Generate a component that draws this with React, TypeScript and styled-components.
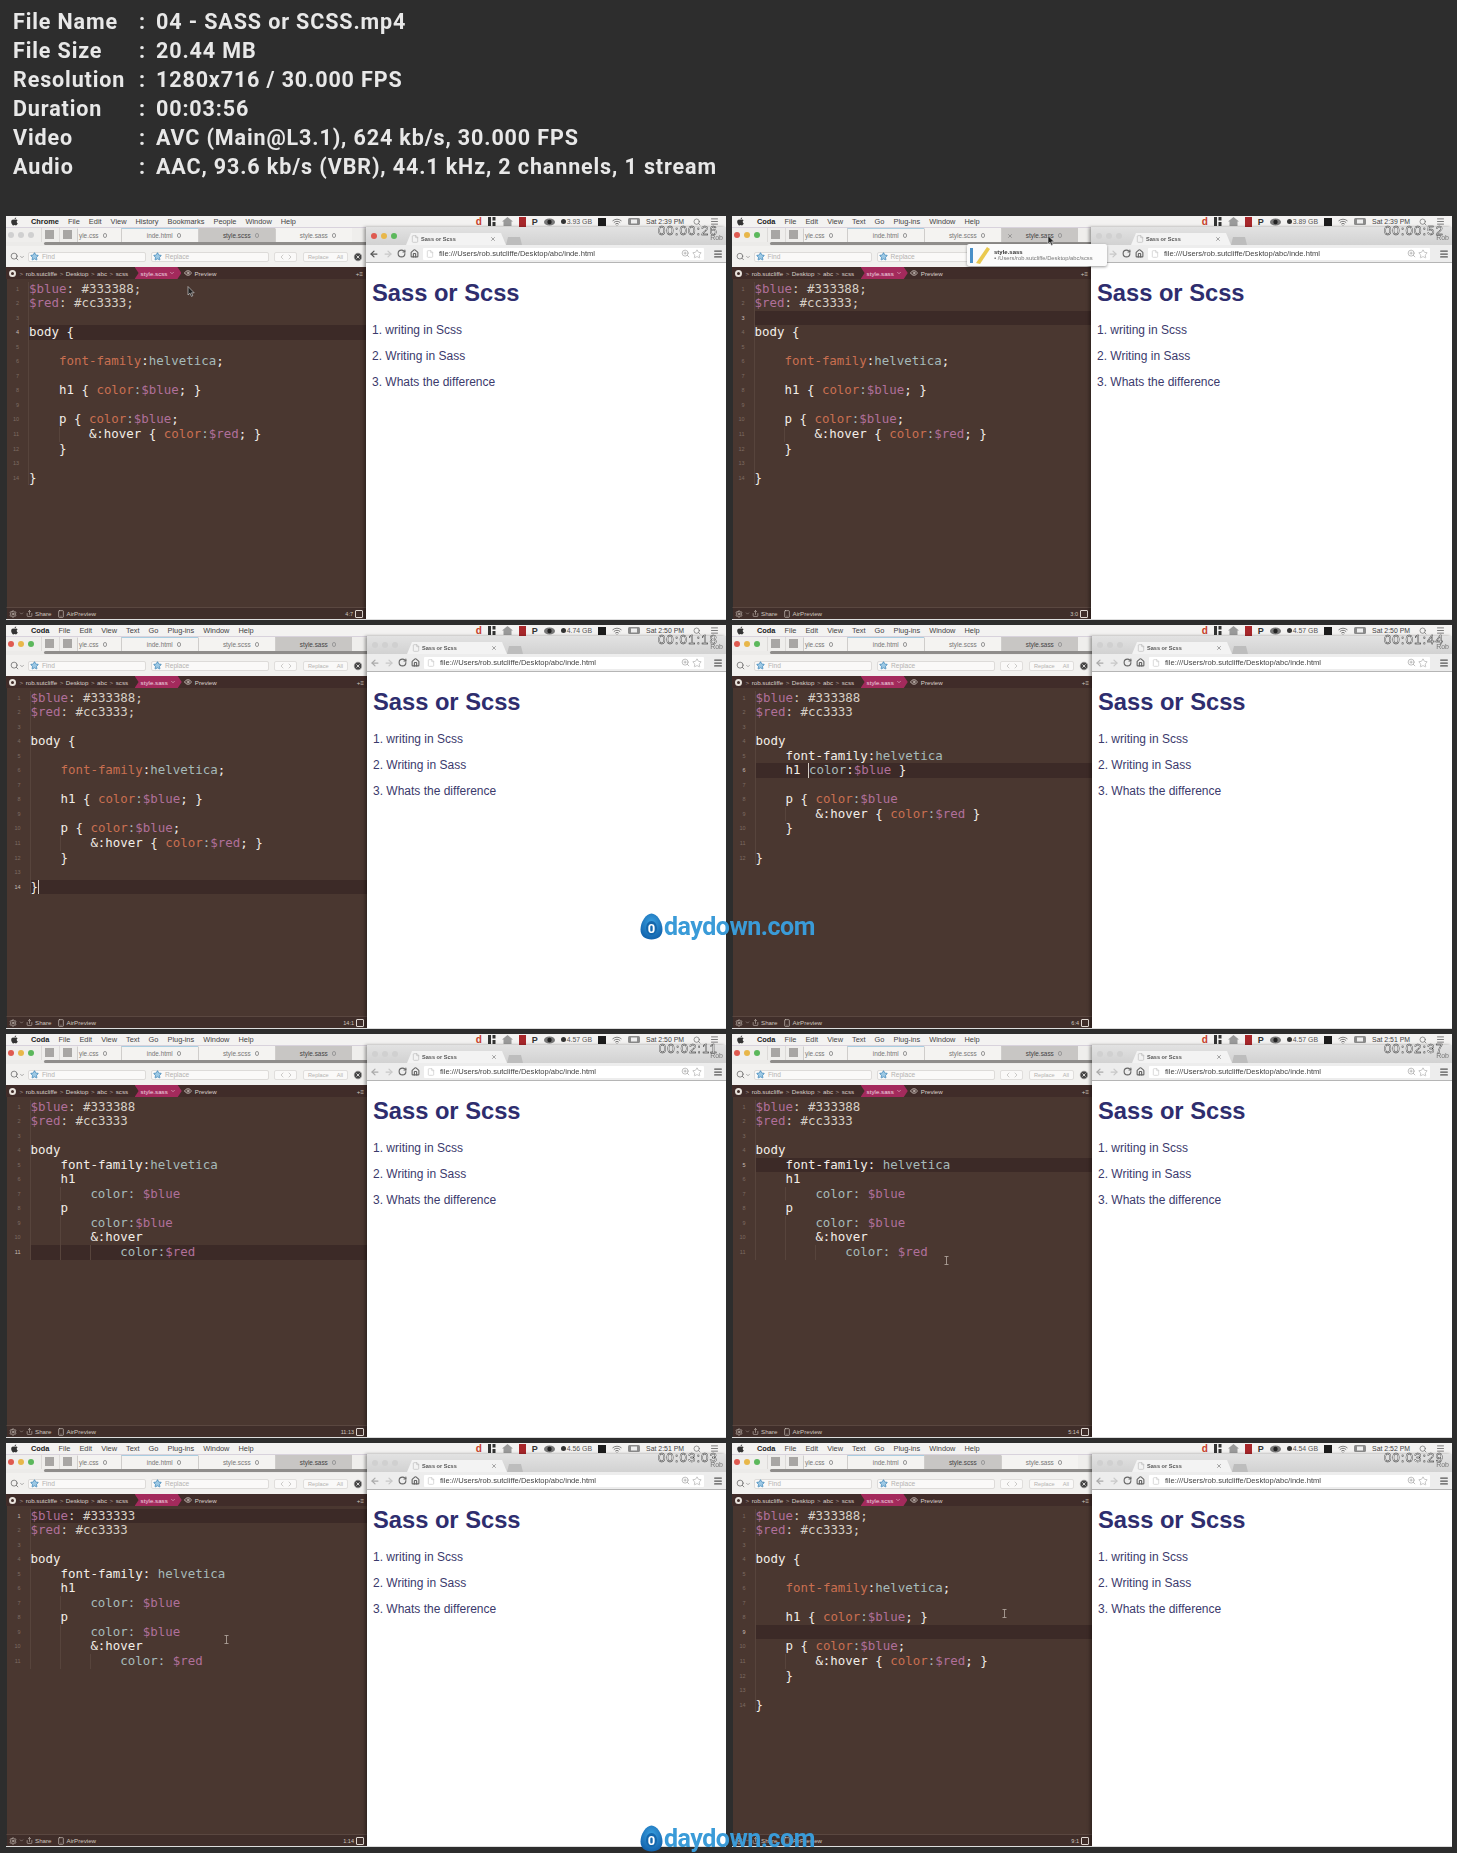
import React from 'react';
import styled, { createGlobalStyle } from 'styled-components';
import { FaApple } from 'react-icons/fa';
import {
  ArrowLeft, ArrowRight, ChevronDown, ChevronLeft, ChevronRight, Eye, File as FileIcon, Home, Menu,
  Plus, RotateCw, Search, Settings, Share, Smartphone, Star, Wifi, X, XCircle, ZoomIn,
} from 'lucide-react';

/* data */
type Kind = 'v' | 'h' | 'w' | 'o' | 't' | 'caret';
type Tok = [Kind, string];
type Line = { indent?: number; toks?: Tok[] };

const blue = (hex = '#333388', end = ''): Line => ({ toks: [['v', '$blue'], ['h', `: ${hex}${end}`]] });
const red = (end = ''): Line => ({ toks: [['v', '$red'], ['h', `: #cc3333${end}`]] });
const w = (indent: number, text: string): Line => ({ indent, toks: [['w', text]] });

const scssLines: Line[] = [
  blue('#333388', ';'),
  red(';'),
  {},
  w(0, 'body {'),
  {},
  { indent: 1, toks: [['o', 'font-family'], ['w', ':'], ['t', 'helvetica'], ['w', ';']] },
  {},
  { indent: 1, toks: [['w', 'h1 { '], ['o', 'color'], ['t', ':'], ['v', '$blue'], ['w', '; }']] },
  {},
  { indent: 1, toks: [['w', 'p { '], ['o', 'color'], ['t', ':'], ['v', '$blue'], ['w', ';']] },
  { indent: 2, toks: [['w', '&:hover { '], ['o', 'color'], ['t', ':'], ['v', '$red'], ['w', '; }']] },
  w(1, '}'),
  {},
  w(0, '}'),
];

const halfLines: Line[] = [
  blue(),
  red(),
  {},
  w(0, 'body'),
  { indent: 1, toks: [['w', 'font-family:'], ['t', 'helvetica']] },
  { indent: 1, toks: [['w', 'h1 '], ['caret', ''], ['t', 'color'], ['w', ':'], ['v', '$blue'], ['w', ' }']] },
  {},
  { indent: 1, toks: [['w', 'p { '], ['o', 'color'], ['t', ':'], ['v', '$blue']] },
  { indent: 2, toks: [['w', '&:hover { '], ['o', 'color'], ['t', ':'], ['v', '$red'], ['w', ' }']] },
  w(1, '}'),
  {},
  w(0, '}'),
];

const sassTight: Line[] = [
  blue(),
  red(),
  {},
  w(0, 'body'),
  { indent: 1, toks: [['w', 'font-family:'], ['t', 'helvetica']] },
  w(1, 'h1'),
  { indent: 2, toks: [['t', 'color: '], ['v', '$blue']] },
  w(1, 'p'),
  { indent: 2, toks: [['t', 'color:'], ['v', '$blue']] },
  w(2, '&:hover'),
  { indent: 3, toks: [['t', 'color:'], ['v', '$red']] },
];

const sassSpaced = (hex: string): Line[] => [
  blue(hex),
  red(),
  {},
  w(0, 'body'),
  { indent: 1, toks: [['w', 'font-family: '], ['t', 'helvetica']] },
  w(1, 'h1'),
  { indent: 2, toks: [['t', 'color: '], ['v', '$blue']] },
  w(1, 'p'),
  { indent: 2, toks: [['t', 'color: '], ['v', '$blue']] },
  w(2, '&:hover'),
  { indent: 3, toks: [['t', 'color: '], ['v', '$red']] },
];

const chromeMenu = ['File', 'Edit', 'View', 'History', 'Bookmarks', 'People', 'Window', 'Help'];
const codaMenu = ['File', 'Edit', 'View', 'Text', 'Go', 'Plug-ins', 'Window', 'Help'];

type Shot = {
  app: string; menu: string[]; mem: string; clock: string; stamp: string; tab: number; lines: Line[];
  active: number; pos: string; split: number; gutter: number; browserFocus?: boolean; tip?: boolean;
  caretEnd?: boolean; arrow?: [number, number]; beam?: [number, number];
};

const shots: Shot[] = [
  { app: 'Chrome', menu: chromeMenu, mem: '3.93 GB', clock: 'Sat 2:39 PM', stamp: '00:00:26', tab: 2, lines: scssLines, active: 4, pos: '4:7', split: 360, gutter: 23, browserFocus: true, arrow: [181, 70] },
  { app: 'Coda', menu: codaMenu, mem: '3.89 GB', clock: 'Sat 2:39 PM', stamp: '00:00:52', tab: 3, lines: scssLines, active: 3, pos: '3:0', split: 359, gutter: 22.5, tip: true, arrow: [315, 19] },
  { app: 'Coda', menu: codaMenu, mem: '4.74 GB', clock: 'Sat 2:50 PM', stamp: '00:01:18', tab: 3, lines: scssLines, active: 14, pos: '14:1', split: 361, gutter: 24.5, caretEnd: true },
  { app: 'Coda', menu: codaMenu, mem: '4.57 GB', clock: 'Sat 2:50 PM', stamp: '00:01:44', tab: 3, lines: halfLines, active: 6, pos: '6:4', split: 360, gutter: 23.5 },
  { app: 'Coda', menu: codaMenu, mem: '4.57 GB', clock: 'Sat 2:50 PM', stamp: '00:02:11', tab: 3, lines: sassTight, active: 11, pos: '11:13', split: 361, gutter: 24.5 },
  { app: 'Coda', menu: codaMenu, mem: '4.57 GB', clock: 'Sat 2:51 PM', stamp: '00:02:37', tab: 3, lines: sassSpaced('#333388'), active: 5, pos: '5:14', split: 360, gutter: 23.5, beam: [212, 222] },
  { app: 'Coda', menu: codaMenu, mem: '4.56 GB', clock: 'Sat 2:51 PM', stamp: '00:03:03', tab: 3, lines: sassSpaced('#333333'), active: 1, pos: '1:14', split: 361, gutter: 24.5, beam: [218, 192] },
  { app: 'Coda', menu: codaMenu, mem: '4.54 GB', clock: 'Sat 2:52 PM', stamp: '00:03:29', tab: 2, lines: scssLines, active: 9, pos: '9:1', split: 360, gutter: 23.5, beam: [270, 166] },
];

const info = [
  ['File Name', '04 - SASS or SCSS.mp4'],
  ['File Size', '20.44 MB'],
  ['Resolution', '1280x716 / 30.000 FPS'],
  ['Duration', '00:03:56'],
  ['Video', 'AVC (Main@L3.1), 624 kb/s, 30.000 FPS'],
  ['Audio', 'AAC, 93.6 kb/s (VBR), 44.1 kHz, 2 channels, 1 stream'],
];

const tabNames = ['yle.css', 'inde.html', 'style.scss', 'style.sass'];

const App: React.FC = () => (
  <Page>
    <GlobalStyle />
    <Header>
      {info.map(([label, value]) => (
        <InfoRow key={label}>
          <span>{label}</span>
          <span>:</span>
          <span>{value}</span>
        </InfoRow>
      ))}
    </Header>
    <Grid>
      {shots.map((shot) => (
        <Thumb key={shot.stamp} shot={shot} />
      ))}
    </Grid>
    <Watermark $top={913} />
    <Watermark $top={1825} />
  </Page>
);

const Watermark: React.FC<{ $top: number }> = ({ $top }) => (
  <MarkWrap $top={$top}>
    <svg width="23" height="27" viewBox="0 0 23 27">
      <defs>
        <radialGradient id="egg" cx="0.5" cy="0.35" r="0.7">
          <stop offset="0" stopColor="#3aa0e0" />
          <stop offset="1" stopColor="#0f5ea8" />
        </radialGradient>
      </defs>
      <path d="M11.5 0.5C17 0.5 22.5 9 22.5 16.5C22.5 23 18 26.5 11.5 26.5C5 26.5 0.5 23 0.5 16.5C0.5 9 6 0.5 11.5 0.5Z" fill="url(#egg)" />
      <ellipse cx="11.5" cy="15" rx="5.5" ry="7" fill="#1467ad" />
      <text x="11.5" y="19.5" textAnchor="middle" fontSize="13" fontWeight="700" fontFamily="Roboto, sans-serif" fill="#fff">0</text>
    </svg>
    <MarkText>daydown.com</MarkText>
  </MarkWrap>
);

const Thumb: React.FC<{ shot: Shot }> = ({ shot }) => (
  <ThumbBox>
    <MenuBar>
      <FaApple size={9} color="#333" />
      <AppName>{shot.app}</AppName>
      {shot.menu.map((m) => <span key={m}>{m}</span>)}
      <Extras>
        <RedGlyph>d</RedGlyph>
        <svg width="8" height="9" viewBox="0 0 8 9"><rect x="0" y="0" width="3" height="9" fill="#333" /><rect x="4.5" y="0" width="3" height="3.5" fill="#333" /><rect x="4.5" y="5" width="3" height="4" fill="#333" /></svg>
        <svg width="11" height="9" viewBox="0 0 11 9"><path d="M5.5 0L11 4.5H9.5V9H1.5V4.5H0Z" fill="#9a9a9a" /></svg>
        <RedBox />
        <DarkGlyph>P</DarkGlyph>
        <svg width="11" height="8" viewBox="0 0 11 8"><ellipse cx="5.5" cy="4" rx="5.5" ry="3.6" fill="#777" /><circle cx="5.5" cy="4" r="2.2" fill="#222" /></svg>
        <Memory><Dot />{shot.mem}</Memory>
        <BlackBag />
        <Wifi size={10} color="#666" />
        <svg width="12" height="7" viewBox="0 0 12 7"><rect width="12" height="7" rx="1.5" fill="#8b8b8b" /><rect x="3" y="1.5" width="6" height="4" fill="#eee" /></svg>
        <span>{shot.clock}</span>
        <Search size={8} color="#666" />
        <Menu size={9} color="#555" />
      </Extras>
    </MenuBar>
    <Desk>
      <EditorCol $width={shot.split}>
        <TabRow>
          <Lights $on={!shot.browserFocus} />
          <SideButton /><SideButton />
          <Tabs>
            {tabNames.map((name, i) => (
              <EditorTab key={name} $first={i === 0} $on={i === shot.tab} $linked={i === 1}>
                {shot.tip && i === 3 && <TabClose><X size={6} /></TabClose>}
                {name} <Ring />
              </EditorTab>
            ))}
          </Tabs>
          <AddTab><Plus size={10} /></AddTab>
        </TabRow>
        <ScrollRow><ScrollThumb /></ScrollRow>
        <FindRow>
          <Search size={9} color="#666" /><Caret2><ChevronDown size={6} /></Caret2>
          <FindBox><Star size={9} color="#3d86b8" fill="#9cc8e4" /><i>Find</i></FindBox>
          <FindBox><Star size={9} color="#3d86b8" fill="#9cc8e4" /><i>Replace</i></FindBox>
          <Stepper><ChevronLeft size={8} /><ChevronRight size={8} /></Stepper>
          <ReplaceAll><span>Replace</span><span>All</span></ReplaceAll>
          <XCircle size={10} color="#f3f1ef" fill="#444" />
        </FindRow>
        <Crumbs>
          <CrumbDot />
          {['rob.sutcliffe', 'Desktop', 'abc', 'scss'].map((c) => (
            <React.Fragment key={c}><CrumbSep>&gt;</CrumbSep><span>{c}</span></React.Fragment>
          ))}
          <FilePill>{tabNames[shot.tab]} <ChevronDown size={6} /></FilePill>
          <Eye size={8} color="#e8e0da" />
          <span>Preview</span>
          <CrumbEnd>+≡</CrumbEnd>
        </Crumbs>
        <Code>
          {shot.lines.map((line, i) => (
            <CodeRow key={i}>
              <LineNo $width={shot.gutter} $on={i + 1 === shot.active}>{i + 1}</LineNo>
              <LineBody $on={i + 1 === shot.active}>
                {Array.from({ length: line.indent || 0 }).map((_, k) => <Indent key={k} $guide={k > 0} />)}
                {(line.toks || []).map(([kind, text], k) =>
                  kind === 'caret' ? <TextCaret key={k} /> : <Token key={k} $kind={kind}>{text}</Token>
                )}
                {shot.caretEnd && i + 1 === shot.active && <TextCaret />}
              </LineBody>
            </CodeRow>
          ))}
        </Code>
        <StatusBar>
          <Settings size={8} /><ChevronDown size={5} />
          <Share size={7} /><span>Share</span>
          <Smartphone size={8} /><span>AirPreview</span>
          <StatusEnd><span>{shot.pos}</span><StatusBox /></StatusEnd>
        </StatusBar>
      </EditorCol>
      <BrowserCol>
        <ChromeTabs>
          <Lights $on={!!shot.browserFocus} />
          <BrowserTab>
            <FileIcon size={8} color="#bbb" />
            <span>Sass or Scss</span>
            <X size={6} />
          </BrowserTab>
          <NewTab />
          <Rob>Rob</Rob>
        </ChromeTabs>
        <Toolbar>
          <ArrowLeft size={10} color={shot.browserFocus ? '#555' : '#aaa'} strokeWidth={3} />
          <ArrowRight size={10} color="#c8c8c8" strokeWidth={3} />
          <RotateCw size={9} color="#666" strokeWidth={3} />
          <Home size={9} color="#666" strokeWidth={3} />
          <UrlBox>
            <FileIcon size={8} color="#c8c8c8" />
            <span>file:///Users/rob.sutcliffe/Desktop/abc/inde.html</span>
            <UrlEnd><ZoomIn size={9} color="#aaa" /><Star size={10} color="#bbb" /></UrlEnd>
          </UrlBox>
          <Menu size={10} color="#555" strokeWidth={3} />
        </Toolbar>
        <Web>
          <h1>Sass or Scss</h1>
          <p>1. writing in Scss</p>
          <p>2. Writing in Sass</p>
          <p>3. Whats the difference</p>
        </Web>
      </BrowserCol>
    </Desk>
    <Stamp>{shot.stamp}</Stamp>
    {shot.tip && (
      <Tip>
        <svg width="22" height="20" viewBox="0 0 22 20">
          <rect x="1" y="3" width="3" height="15" fill="#4a90c8" />
          <path d="M7 18L18 2L21 4L11 19Z" fill="#eac94f" />
        </svg>
        <div>
          <TipName>style.sass</TipName>
          <TipPath>▪ /Users/rob.sutcliffe/Desktop/abc/scss</TipPath>
        </div>
      </Tip>
    )}
    {shot.arrow && (
      <Pointer $x={shot.arrow[0]} $y={shot.arrow[1]}>
        <svg width="8" height="11" viewBox="0 0 8 11"><path d="M1 0.5V9L3 7.2L4.4 10.4L5.8 9.8L4.5 6.8H7.2Z" fill="#222" stroke="#ddd" strokeWidth="0.6" /></svg>
      </Pointer>
    )}
    {shot.beam && (
      <Pointer $x={shot.beam[0]} $y={shot.beam[1]}>
        <svg width="5" height="9" viewBox="0 0 5 9"><path d="M0.5 0.5H4.5M2.5 0.5V8.5M0.5 8.5H4.5" stroke="#b8aca4" strokeWidth="0.8" fill="none" /></svg>
      </Pointer>
    )}
  </ThumbBox>
);

export default App;

/* Styling */
const GlobalStyle = createGlobalStyle`
  html, body { margin: 0; padding: 0; background: #2d2d2d; }
`;

const Page = styled.div`
  position: relative;
  width: 1457px;
  height: 1853px;
  background: #2d2d2d;
  overflow: hidden;
  font-family: 'Liberation Sans', Arial, sans-serif;
`;

const Header = styled.div`
  height: 216px;
  box-sizing: border-box;
  padding: 7px 0 0 13px;
  filter: blur(0.3px);
`;

const InfoRow = styled.div`
  display: grid;
  grid-template-columns: 126px 17px 1fr;
  height: 29px;
  font: 700 21.5px/29px Roboto, 'Open Sans', sans-serif;
  letter-spacing: 0.88px;
  color: #e8e8e8;
  white-space: nowrap;
`;

const Grid = styled.div`
  display: grid;
  grid-template-columns: repeat(2, 720px);
  grid-auto-rows: 404px;
  gap: 5px 6px;
  padding-left: 6px;
`;

const ThumbBox = styled.div`
  position: relative;
  display: flex;
  flex-direction: column;
  overflow: hidden;
  filter: blur(0.3px);
  border-bottom: 1px solid #ddd;
  box-sizing: border-box;
`;

const MenuBar = styled.div`
  flex: 0 0 11px;
  display: flex;
  align-items: center;
  gap: 9px;
  padding-left: 4px;
  background: #f3f2f1;
  color: #444;
  font-size: 7.4px;
  white-space: nowrap;
`;

const AppName = styled.b`
  color: #222;
  margin-left: 3px;
`;

const Extras = styled.div`
  margin-left: auto;
  display: flex;
  align-items: center;
  gap: 6px;
  padding-right: 7px;
  font-size: 6.9px;
  svg:nth-last-child(-n + 2) { margin-left: 3px; }
`;

const RedGlyph = styled.b`
  color: #c8402a;
  font-size: 10px;
`;

const DarkGlyph = styled.b`
  color: #333;
  font-size: 9px;
`;

const RedBox = styled.div`
  width: 7px;
  height: 10px;
  background: #a8272b;
`;

const BlackBag = styled.div`
  width: 8px;
  height: 8px;
  background: #1c1c1c;
`;

const Memory = styled.span`
  display: flex;
  align-items: center;
  gap: 1px;
  color: #555;
`;

const Dot = styled.i`
  width: 5px;
  height: 5px;
  border-radius: 50%;
  background: #333;
`;

const Desk = styled.div`
  flex: 1;
  min-height: 0;
  display: flex;
`;

const EditorCol = styled.div<{ $width: number }>`
  flex: 0 0 ${(p) => p.$width}px;
  min-width: 0;
  display: flex;
  flex-direction: column;
`;

const TabRow = styled.div`
  flex: 0 0 15px;
  display: flex;
  align-items: stretch;
  background: #efeeec;
  border-top: 1px solid #d8d2dc;
  box-sizing: border-box;
`;

const Lights = styled.div<{ $on: boolean }>`
  flex: 0 0 auto;
  align-self: center;
  width: 6px;
  height: 6px;
  margin: 0 27px 0 2px;
  border-radius: 50%;
  background: ${(p) => (p.$on ? '#df5a50' : '#d0d0d0')};
  box-shadow:
    10px 0 0 ${(p) => (p.$on ? '#e8b74a' : '#d0d0d0')},
    20px 0 0 ${(p) => (p.$on ? '#5cb85c' : '#d0d0d0')};
`;

const SideButton = styled.div`
  flex: 0 0 18px;
  position: relative;
  border-left: 1px solid #dcdad8;
  box-sizing: border-box;
  &::after {
    content: '';
    display: block;
    width: 9px;
    height: 9px;
    margin: 2px 0 0 3px;
    background: #a8a6a4;
  }
`;

const Tabs = styled.div`
  flex: 1;
  display: flex;
  min-width: 0;
`;

const EditorTab = styled.div<{ $first: boolean; $on: boolean; $linked: boolean }>`
  position: relative;
  flex: ${(p) => (p.$first ? '0 0 44px' : '0 0 77px')};
  display: flex;
  align-items: center;
  justify-content: ${(p) => (p.$first ? 'flex-start' : 'center')};
  gap: 2px;
  padding-left: ${(p) => (p.$first ? '1px' : '8px')};
  box-sizing: border-box;
  font-size: 6.4px;
  color: ${(p) => (p.$on ? '#444' : '#777')};
  background: ${(p) => (p.$on ? '#c8c6c4' : '#f4f3f1')};
  border-left: 1px solid #cfcdcb;
  border-top: 1px solid ${(p) => (p.$linked ? '#a9cde0' : 'transparent')};
  white-space: nowrap;
`;

const Ring = styled.i`
  width: 2.5px;
  height: 2.5px;
  margin-left: 2px;
  border: 0.6px solid #999;
  border-radius: 50%;
`;

const TabClose = styled.span`
  position: absolute;
  left: 5px;
  top: 4px;
  color: #666;
`;

const AddTab = styled.div`
  flex: 1 0 14px;
  display: flex;
  align-items: center;
  justify-content: center;
  color: #888;
  border-left: 1px solid #cfcdcb;
`;

const ScrollRow = styled.div`
  flex: 0 0 4px;
  background: #ecebe9;
  padding-left: 38px;
`;

const ScrollThumb = styled.div`
  height: 3px;
  background: #8f8d8b;
  border-radius: 2px 0 0 2px;
`;

const FindRow = styled.div`
  flex: 0 0 21px;
  display: flex;
  align-items: center;
  padding: 0 3px 0 4px;
  background: #f2f1ef;
  font-size: 6.6px;
  color: #b5b3b1;
`;

const Caret2 = styled.span`
  display: flex;
  margin-right: 3px;
  color: #666;
`;

const FindBox = styled.div`
  flex: 0 0 118px;
  height: 10px;
  display: flex;
  align-items: center;
  gap: 3px;
  margin-right: 5px;
  padding-left: 1px;
  box-sizing: border-box;
  background: #faf9f8;
  border: 1px solid #dddbd9;
  border-radius: 2px;
  i { font-style: normal; }
`;

const Stepper = styled.div`
  flex: 0 0 23px;
  height: 10px;
  display: flex;
  align-items: center;
  justify-content: center;
  box-sizing: border-box;
  border: 1px solid #e0dedc;
  border-radius: 2px;
  background: #faf9f8;
  color: #b5b3b1;
`;

const ReplaceAll = styled.div`
  flex: 0 0 45px;
  height: 10px;
  margin: 0 5px 0 6px;
  display: flex;
  align-items: center;
  justify-content: space-around;
  box-sizing: border-box;
  border: 1px solid #e0dedc;
  border-radius: 2px;
  background: #faf9f8;
  font-size: 5.6px;
`;

const Crumbs = styled.div`
  flex: 0 0 12px;
  display: flex;
  align-items: center;
  gap: 2.5px;
  padding-left: 4px;
  background: #402c29;
  color: #d8cfc9;
  font-size: 6.2px;
  white-space: nowrap;
`;

const CrumbDot = styled.i`
  width: 3px;
  height: 3px;
  margin: 0 1px 0 -1px;
  border: 2px solid #e8e2dc;
  border-radius: 50%;
`;

const CrumbSep = styled.span`
  color: #a89a92;
`;

const FilePill = styled.div`
  height: 12px;
  display: flex;
  align-items: center;
  gap: 2px;
  margin: 0 0 0 4px;
  padding: 0 6px;
  color: #f0d8e0;
  background: #a32a5c;
  clip-path: polygon(0 0, calc(100% - 4px) 0, 100% 50%, calc(100% - 4px) 100%, 0 100%, 4px 50%);
`;

const CrumbEnd = styled.span`
  margin-left: auto;
  padding-right: 3px;
  color: #cfc5be;
`;

const Code = styled.div`
  flex: 1;
  min-height: 0;
  padding-top: 2.5px;
  background: #4a3730;
  border-left: 1px solid #2d2d2d;
  font: 12.45px/14.55px 'DejaVu Sans Mono', 'Liberation Mono', monospace;
  overflow: hidden;
`;

const CodeRow = styled.div`
  display: flex;
  height: 14.55px;
`;

const LineNo = styled.div<{ $width: number; $on: boolean }>`
  flex: 0 0 ${(p) => p.$width - 1}px;
  box-sizing: border-box;
  padding-right: 9px;
  text-align: right;
  font: 5.5px/14.55px 'Liberation Sans', sans-serif;
  color: ${(p) => (p.$on ? '#c8beb7' : '#7d6c63')};
  border-right: 1px solid #57443c;
`;

const LineBody = styled.div<{ $on: boolean }>`
  flex: 1;
  display: flex;
  white-space: pre;
  background: ${(p) => (p.$on ? '#3c2a27' : 'transparent')};
`;

const Indent = styled.i<{ $guide: boolean }>`
  flex: 0 0 4ch;
  box-sizing: border-box;
  border-left: 1px solid ${(p) => (p.$guide ? '#57443c' : 'transparent')};
`;

const tokenColors: Record<string, string> = {
  v: '#b0709a',
  h: '#d6cfc6',
  w: '#f3eee8',
  o: '#c96f50',
  t: '#a6baba',
};

const Token = styled.span<{ $kind: string }>`
  color: ${(p) => tokenColors[p.$kind]};
`;

const TextCaret = styled.i`
  width: 0;
  border-left: 1px solid #d8d0c8;
`;

const StatusBar = styled.div`
  flex: 0 0 12px;
  display: flex;
  align-items: center;
  gap: 2px;
  padding-left: 2px;
  background: #402e2a;
  border-top: 1px solid #5a4740;
  border-left: 1px solid #2d2d2d;
  box-sizing: border-box;
  color: #cfc5be;
  font-size: 6.2px;
  span + svg { margin-left: 3px; }
`;

const StatusEnd = styled.div`
  margin-left: auto;
  padding-right: 3px;
  display: flex;
  align-items: center;
  gap: 2px;
  font-size: 5.5px;
`;

const StatusBox = styled.i`
  width: 6px;
  height: 6px;
  border: 1px solid #e0d8d2;
  border-radius: 1px;
`;

const BrowserCol = styled.div`
  flex: 1;
  min-width: 0;
  display: flex;
  flex-direction: column;
  box-shadow: -2px 0 3px rgba(0, 0, 0, 0.35);
  z-index: 1;
`;

const ChromeTabs = styled.div`
  position: relative;
  flex: 0 0 18px;
  display: flex;
  align-items: flex-end;
  padding-left: 5px;
  background: linear-gradient(#e2e2e2, #d2d2d2);
  > :first-child { align-self: center; margin: 0 29px 0 0; }
`;

const BrowserTab = styled.div`
  flex: 0 0 100px;
  height: 12px;
  display: flex;
  align-items: center;
  gap: 2px;
  padding: 0 10px 0 5px;
  box-sizing: border-box;
  background: #f3f3f3;
  color: #555;
  font-size: 5.6px;
  font-weight: 700;
  clip-path: polygon(5px 0, calc(100% - 5px) 0, 100% 100%, 0 100%);
  svg:last-child { margin-left: auto; }
`;

const NewTab = styled.div`
  flex: 0 0 16px;
  height: 8px;
  background: #bdbdbd;
  clip-path: polygon(2px 0, calc(100% - 2px) 0, 100% 100%, 0 100%);
`;

const Rob = styled.span`
  position: absolute;
  right: 3px;
  top: 7px;
  color: #777;
  font-size: 7px;
`;

const Toolbar = styled.div`
  flex: 0 0 18px;
  display: flex;
  align-items: center;
  gap: 4px;
  padding: 0 3px 0 3px;
  box-sizing: border-box;
  background: #ededed;
  border-bottom: 1px solid #b5b5b5;
`;

const UrlBox = styled.div`
  flex: 1;
  height: 12px;
  display: flex;
  align-items: center;
  gap: 5px;
  margin: 0 5px 0 0;
  padding: 0 2px 0 3px;
  background: #fff;
  border-radius: 1px;
  color: #444;
  font-size: 7.6px;
`;

const UrlEnd = styled.span`
  margin-left: auto;
  display: flex;
  gap: 2px;
`;

const Web = styled.div`
  flex: 1;
  padding: 16px 0 0 6px;
  background: #fff;
  color: #3b3a6c;
  font-size: 12px;
  line-height: 26px;
  h1 {
    margin: 0 0 10px;
    font-size: 23.7px;
    line-height: 28px;
    color: #2e2d6e;
  }
  p { margin: 0; }
`;

const Stamp = styled.div`
  position: absolute;
  top: 8px;
  right: 8px;
  z-index: 3;
  font: 400 13.4px/14px 'Liberation Sans', sans-serif;
  letter-spacing: 1px;
  color: #fff;
  -webkit-text-stroke: 0.4px #222;
`;

const Tip = styled.div`
  position: absolute;
  left: 235px;
  top: 28px;
  z-index: 3;
  width: 140px;
  height: 22px;
  display: flex;
  align-items: center;
  gap: 3px;
  padding-left: 2px;
  box-sizing: border-box;
  background: #fbfbfb;
  border-radius: 2px;
  box-shadow: 0 1px 3px rgba(0, 0, 0, 0.4);
`;

const TipName = styled.div`
  font-size: 6px;
  font-weight: 700;
  color: #333;
`;

const TipPath = styled.div`
  font-size: 5.8px;
  color: #777;
  white-space: nowrap;
`;

const Pointer = styled.div<{ $x: number; $y: number }>`
  position: absolute;
  left: ${(p) => p.$x}px;
  top: ${(p) => p.$y}px;
  z-index: 4;
  line-height: 0;
`;

const MarkWrap = styled.div<{ $top: number }>`
  position: absolute;
  left: 640px;
  top: ${(p) => p.$top}px;
  z-index: 5;
  display: flex;
  align-items: center;
  gap: 1px;
`;

const MarkText = styled.span`
  font: 700 25px/27px Roboto, Lato, sans-serif;
  letter-spacing: -0.5px;
  color: #3a9bd8;
`;
